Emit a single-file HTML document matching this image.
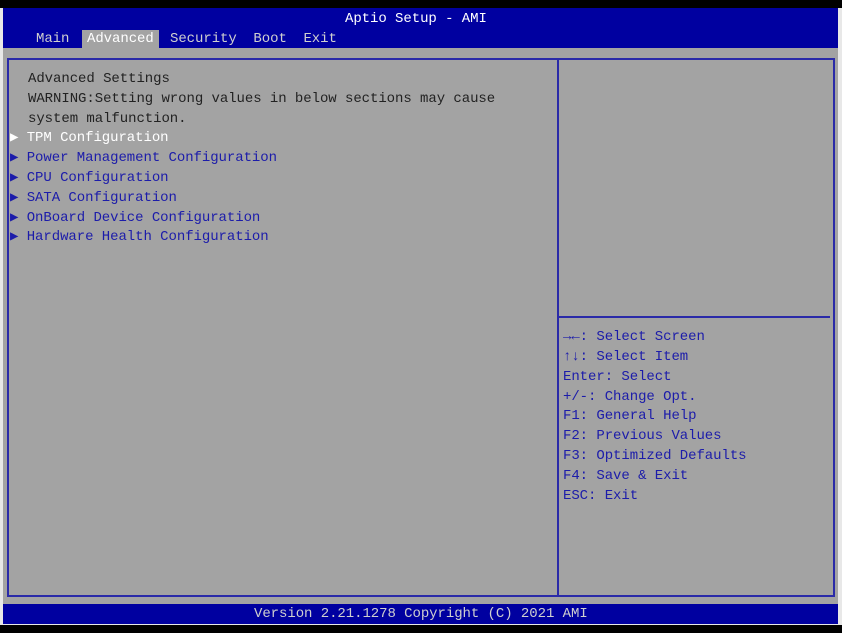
<!DOCTYPE html>
<html><head><style>
body{margin:0;width:842px;height:633px;background:#000;position:relative;overflow:hidden;font-family:"Liberation Mono",monospace;font-size:14px;letter-spacing:-0.06px;}
.a{position:absolute;white-space:pre;line-height:19.85px;}
#edge{position:absolute;left:0;top:8px;width:842px;height:617px;background:#e8e8e8;}
#hdr{position:absolute;left:3px;top:8px;width:835px;height:40px;background:#0000a0;}
#body{position:absolute;left:3px;top:48px;width:835px;height:556px;background:#a3a3a3;}
#ftr{position:absolute;left:3px;top:604px;width:835px;height:20px;background:#0000a0;}
#box{position:absolute;left:7px;top:58px;width:824px;height:535px;border:2px solid #2a2aa8;}
#div{position:absolute;left:557px;top:58px;width:2px;height:537px;background:#2a2aa8;}
#hl{position:absolute;left:559px;top:316px;width:271px;height:2px;background:#2a2aa8;}
#tab{position:absolute;left:82px;top:30px;width:77px;height:18px;background:#a3a3a3;}
.w{color:#fff}.d{color:#222}.b{color:#1c1caa}.g{color:#cfcfcf}
</style></head><body>
<div id="edge"></div><div id="hdr"></div><div id="body"></div><div id="ftr"></div>
<div id="tab"></div>
<div id="box"></div><div id="div"></div><div id="hl"></div>
<div class="a w" style="left:345px;top:10px">Aptio Setup - AMI</div>
<div class="a g" style="left:36px;top:30px">Main</div>
<div class="a w" style="left:87px;top:30px">Advanced</div>
<div class="a g" style="left:170px;top:30px">Security  Boot  Exit</div>
<div class="a d" style="left:28px;top:70px">Advanced Settings
WARNING:Setting wrong values in below sections may cause
system malfunction.</div>
<div class="a w" style="left:10px;top:129px">▶ TPM Configuration</div>
<div class="a b" style="left:10px;top:149px">▶ Power Management Configuration
▶ CPU Configuration
▶ SATA Configuration
▶ OnBoard Device Configuration
▶ Hardware Health Configuration</div>
<div class="a b" style="left:563px;top:328px">→←: Select Screen
↑↓: Select Item
Enter: Select
+/-: Change Opt.
F1: General Help
F2: Previous Values
F3: Optimized Defaults
F4: Save &amp; Exit
ESC: Exit</div>
<div class="a g" style="left:254px;top:605px">Version 2.21.1278 Copyright (C) 2021 AMI</div>
</body></html>
